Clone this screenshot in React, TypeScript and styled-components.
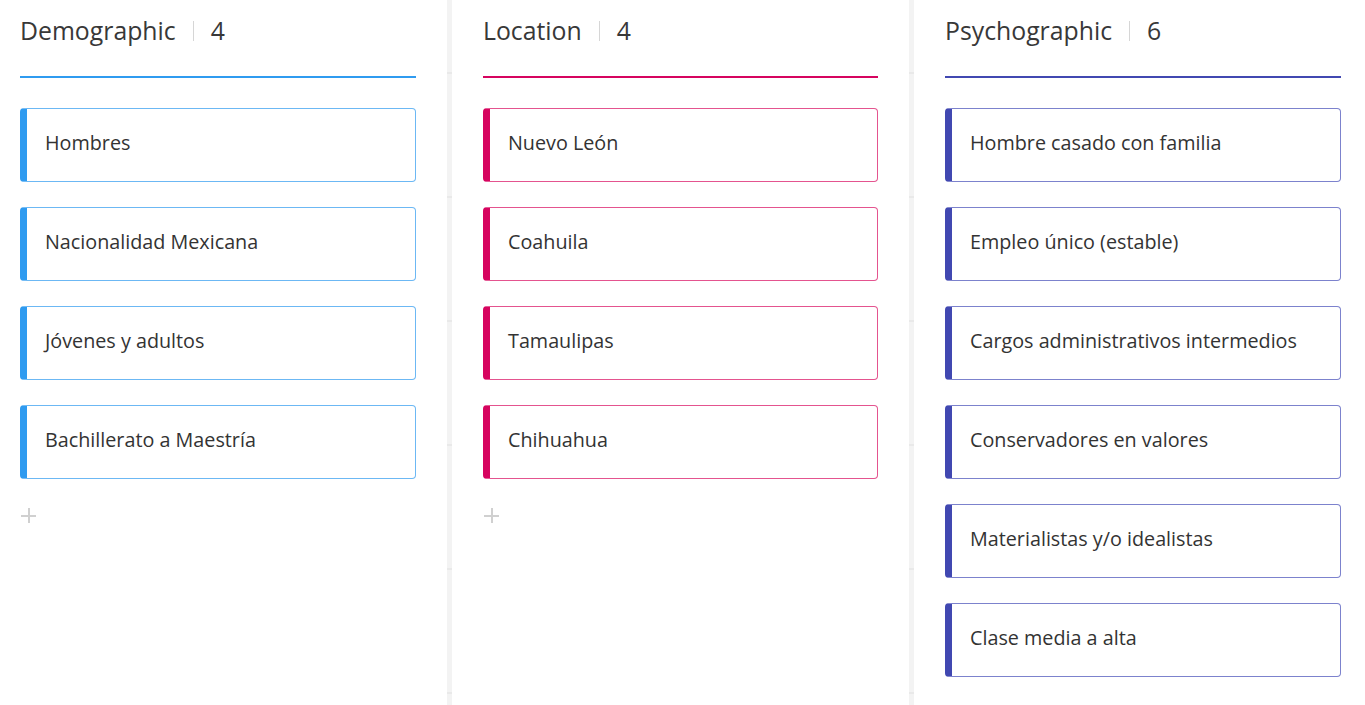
import React from "react";
import styled, { createGlobalStyle } from "styled-components";

const GlobalStyle = createGlobalStyle`
  html, body {
    margin: 0;
    padding: 0;
    background: #ffffff;
    overflow: hidden;
  }
  body {
    font-family: "Open Sans", "Liberation Sans", sans-serif;
    color: #333333;
  }
`;

type Tone = { main: string; light: string };

const tones: Record<string, Tone> = {
  blue: { main: "#2f9bf0", light: "#6cb8f4" },
  pink: { main: "#d6045f", light: "#e4548f" },
  purple: { main: "#4148b1", light: "#7c82cd" },
};

const columns = [
  {
    title: "Demographic",
    tone: tones.blue,
    items: ["Hombres", "Nacionalidad Mexicana", "Jóvenes y adultos", "Bachillerato a Maestría"],
    add: true,
  },
  {
    title: "Location",
    tone: tones.pink,
    items: ["Nuevo León", "Coahuila", "Tamaulipas", "Chihuahua"],
    add: true,
  },
  {
    title: "Psychographic",
    tone: tones.purple,
    items: [
      "Hombre casado con familia",
      "Empleo único (estable)",
      "Cargos administrativos intermedios",
      "Conservadores en valores",
      "Materialistas y/o idealistas",
      "Clase media a alta",
    ],
    add: false,
  },
];

const Board = styled.div`
  display: flex;
  height: 705px;
  margin-left: -11px;
  overflow: hidden;
`;

const Column = styled.section`
  flex: 0 0 457px;
  box-sizing: border-box;
  padding: 0 31px 0 31px;
  height: 705px;

  &:first-child {
    flex-basis: 458px;
  }
  &:last-child {
    padding-right: 30px;
  }
`;

const Separator = styled.div`
  flex: 0 0 5px;
  height: 705px;
  background-color: #f3f3f3;
  background-image: repeating-linear-gradient(
    to bottom,
    transparent 0px,
    transparent 72px,
    #e9e9e9 72px,
    #e9e9e9 74px,
    transparent 74px,
    transparent 124px
  );
`;

const Header = styled.header<{ $color: string }>`
  display: flex;
  align-items: center;
  height: 78px;
  box-sizing: border-box;
  padding-bottom: 15px;
  border-bottom: 2px solid ${(p) => p.$color};
  font-size: 24.8px;
  line-height: 1;
  color: #383838;
`;

const Title = styled.span`
  font-weight: 400;
`;

const Divider = styled.span`
  width: 1px;
  height: 20px;
  background: #d6d6d6;
  margin: 0 17px;
`;

const Count = styled.span``;

const List = styled.div`
  display: flex;
  flex-direction: column;
  gap: 25px;
  padding-top: 30px;
`;

const Card = styled.div<{ $tone: Tone }>`
  height: 74px;
  box-sizing: border-box;
  display: flex;
  align-items: center;
  padding: 0 0 6px 18px;
  border: 1px solid ${(p) => p.$tone.light};
  border-left: 7px solid ${(p) => p.$tone.main};
  border-radius: 4px;
  background: #ffffff;
  font-size: 19.75px;
  color: #333333;
`;

const AddButton = styled.div`
  margin-top: 29px;
  margin-left: 1px;
  width: 16px;
  height: 16px;
  position: relative;
  &::before,
  &::after {
    content: "";
    position: absolute;
    background: #d0d0d0;
  }
  &::before {
    left: 0;
    top: 7px;
    width: 15px;
    height: 2px;
  }
  &::after {
    left: 6.5px;
    top: 0;
    width: 2px;
    height: 15px;
  }
`;

export default function App() {
  return (
    <>
      <GlobalStyle />
      <Board>
        {columns.map((col, i) => (
          <React.Fragment key={col.title}>
            {i > 0 && <Separator />}
            <Column>
              <Header $color={col.tone.main}>
                <Title>{col.title}</Title>
                <Divider />
                <Count>{col.items.length}</Count>
              </Header>
              <List>
                {col.items.map((item) => (
                  <Card key={item} $tone={col.tone}>
                    {item}
                  </Card>
                ))}
              </List>
              {col.add && <AddButton />}
            </Column>
          </React.Fragment>
        ))}
      </Board>
    </>
  );
}
